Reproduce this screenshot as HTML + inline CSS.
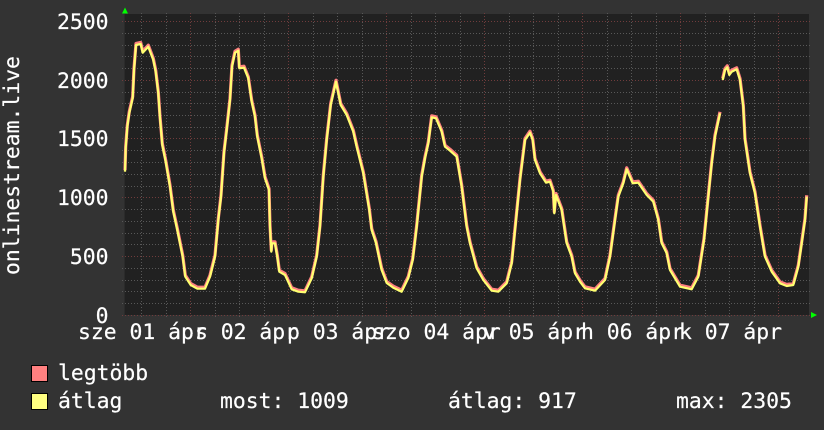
<!DOCTYPE html>
<html><head><meta charset="utf-8"><style>
html,body{margin:0;padding:0;background:#333}
svg{display:block}
text{font-family:"DejaVu Sans Mono","Liberation Mono",monospace;font-size:21.4px;fill:#fff;stroke:#fff;stroke-width:.2px}
</style></head><body>
<svg xmlns="http://www.w3.org/2000/svg" width="824" height="430" viewBox="0 0 824 430">
<rect width="824" height="430" fill="#333"/>
<rect x="125" y="14" width="684" height="301" fill="#212121"/>
<rect x="124" y="14" width="1" height="301" fill="#2b2b2b"/>
<g stroke="#585858" stroke-width="1" stroke-dasharray="1 2" fill="none" shape-rendering="crispEdges">
<path d="M122 33.5H810M122 45.5H810M122 56.5H810M122 68.5H810M122 92.5H810M122 103.5H810M122 115.5H810M122 127.5H810M122 150.5H810M122 162.5H810M122 174.5H810M122 186.5H810M122 209.5H810M122 221.5H810M122 233.5H810M122 244.5H810M122 268.5H810M122 280.5H810M122 291.5H810M122 303.5H810"/>
<path d="M141.5 13V318M166.5 13V318M215.5 13V318M239.5 13V318M264.5 13V318M313.5 13V318M337.5 13V318M362.5 13V318M411.5 13V318M435.5 13V318M460.5 13V318M509.5 13V318M533.5 13V318M558.5 13V318M607.5 13V318M631.5 13V318M656.5 13V318M705.5 13V318M729.5 13V318M754.5 13V318"/>
</g>
<g stroke="#703c3c" stroke-width="1" stroke-dasharray="1 2" fill="none" shape-rendering="crispEdges">
<path d="M122 21.5H810M122 80.5H810M122 138.5H810M122 197.5H810M122 256.5H810M122 315.5H810"/>
<path d="M190.5 13V319M288.5 13V319M386.5 13V319M484.5 13V319M582.5 13V319M680.5 13V319M778.5 13V319"/>
</g>
<defs>
<path id="a" d="M125 171.7L125.7 148L127.3 126.7L129.3 113L132.7 98L134 70L136 45L140.7 44L142.7 52.7L148.3 46.7L153.3 60L155.7 71.7L158.3 93.3L160 118L162.3 145L165.7 161.7L170 186.7L173.3 211.7L177.3 230L182.7 256.7L185.3 276.7L190.7 285L197.3 288.7L205 288.7L210 276.7L215 256.7L218.3 220L221 196.7L224 153L226.7 130L230 100L232 66.7L235 52.7L238.3 50.7L239.3 68.3L244 67.7L248.3 78.3L251.7 101.7L255 116.7L257.3 136.7L261.7 158.3L265 178.3L269 190L270 226.7L271.3 251.7L272 243.3L275 243.3L277.3 256.7L279.3 271.7L285 275L291.7 289.3L298.3 291.7L305 292.3L311.7 278.3L316.7 256.7L320 226.7L323.3 176.7L326.7 140L330.7 105L336 81.7L340.7 105L346.7 115L353.3 131.7L356.7 146.7L363.3 173.3L369.3 210L371.7 230L376 243L381.7 270L386.7 283L393.3 287.7L401.7 291.7L408.3 278L412.7 260L416.7 226.7L421.7 176.7L425 158.3L428.3 143.3L431.7 117.3L436 118.3L441.7 131.7L445 146.7L450 150.7L456.7 156.7L461.7 186.7L466.7 226.7L470 243.3L476.7 268.3L483.3 280L491.7 290.7L498.3 291.7L506.7 283.3L511.7 263.3L515 230L520 180L525 140L530 132.7L532.7 140L535 160L540 173.3L546 182.7L550 181.7L553.3 191.7L554.3 213.3L556 195L561.7 210L566.7 243.3L571.7 256.7L575 273.3L580 281.7L585 288.3L595 290.7L605 280L610 256.7L615 220L618.3 196.7L623.3 183.3L626.7 169.3L632.7 183.3L638.3 182.7L646.7 195L653.3 201.7L658.3 220L661.7 243.3L666.7 253.3L670 270L680 286.7L691.7 289.3L698.3 276.7L704 240L708.3 196.7L711.7 163.3L715 136.7L720 113.3M722.7 80L725 70L727.3 67.3L729.3 75L731.7 71.7L736.7 69.3L740 80L743.3 106.7L745 140L750 173.3L755 193.3L760 226.7L765 256.7L771.7 271.7L780 283.3L786.7 286L793.3 285L798.3 266.7L801.7 243.3L805 220L806.7 196.7"/>
</defs>
<use href="#a" transform="translate(0,-1.5)" fill="none" stroke="#ff8080" stroke-width="3.2" stroke-linejoin="round"/>
<use href="#a" fill="none" stroke="#ffff70" stroke-width="2.2" stroke-linejoin="round"/>
<path d="M122 13.5L125 7.5L128 13.5Z" fill="#0f0"/>
<path d="M811 312L817 315L811 318Z" fill="#0f0"/>
<text x="108.5" y="29" text-anchor="end">2500</text>
<text x="108.5" y="88" text-anchor="end">2000</text>
<text x="108.5" y="146" text-anchor="end">1500</text>
<text x="108.5" y="205" text-anchor="end">1000</text>
<text x="108.5" y="264" text-anchor="end">500</text>
<text x="108.5" y="323" text-anchor="end">0</text>
<text x="78" y="339">sze 01 ápr</text>
<text x="195" y="339">s 02 ápr</text>
<text x="287" y="339">p 03 ápr</text>
<text x="372" y="339">szo 04 ápr</text>
<text x="483" y="339">v 05 ápr</text>
<text x="581" y="339">h 06 ápr</text>
<text x="679" y="339">k 07 ápr</text>
<text transform="translate(19,275) rotate(-90)">onlinestream.live</text>
<rect x="31.5" y="365.5" width="16" height="16" fill="#ff8080" stroke="#000"/>
<rect x="31.5" y="393.5" width="16" height="16" fill="#ffff80" stroke="#000"/>
<text x="58" y="380">legtöbb</text>
<text x="58" y="408">átlag</text>
<text x="220" y="408">most: 1009</text>
<text x="448" y="408">átlag: 917</text>
<text x="676" y="408">max: 2305</text>
</svg>
</body></html>
